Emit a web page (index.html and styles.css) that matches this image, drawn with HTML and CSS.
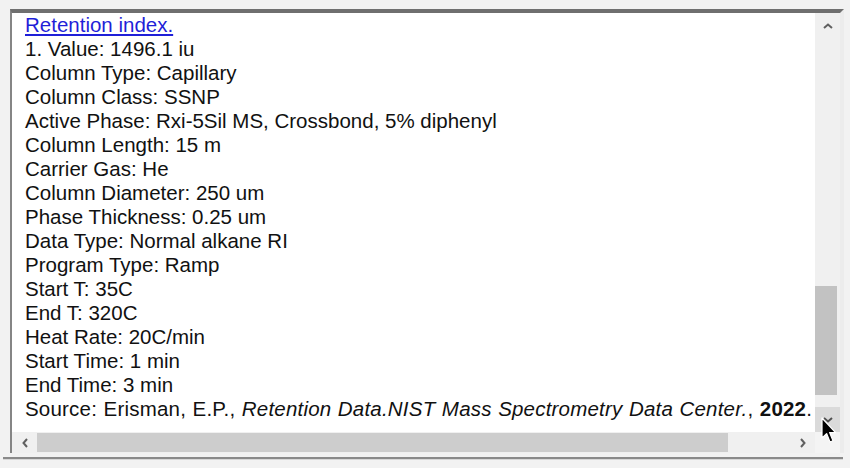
FILE: index.html
```html
<!DOCTYPE html>
<html>
<head>
<meta charset="utf-8">
<link rel="stylesheet" href="styles.css">
</head>
<body>
<div class="frame">
  <div class="content">
    <div class="line"><a class="link" href="#">Retention index.</a></div>
    <div class="line">1. Value: 1496.1 iu</div>
    <div class="line">Column Type: Capillary</div>
    <div class="line">Column Class: SSNP</div>
    <div class="line">Active Phase: Rxi-5Sil MS, Crossbond, 5% diphenyl</div>
    <div class="line">Column Length: 15 m</div>
    <div class="line">Carrier Gas: He</div>
    <div class="line">Column Diameter: 250 um</div>
    <div class="line">Phase Thickness: 0.25 um</div>
    <div class="line">Data Type: Normal alkane RI</div>
    <div class="line">Program Type: Ramp</div>
    <div class="line">Start T: 35C</div>
    <div class="line">End T: 320C</div>
    <div class="line">Heat Rate: 20C/min</div>
    <div class="line">Start Time: 1 min</div>
    <div class="line">End Time: 3 min</div>
    <div class="line source">Source: Erisman, E.P., <i>Retention Data.NIST Mass Spectrometry Data Center.</i>, <b>2022</b>.</div>
  </div>
  <div class="vscroll">
    <div class="btn"><svg width="10" height="6" viewBox="0 0 10 6"><polyline points="1,5 5,1.5 9,5" fill="none" stroke="#606060" stroke-width="2"/></svg></div>
    <div class="vtrack"><div class="vthumb"></div></div>
    <div class="btn btn-hover"><svg width="10" height="6" viewBox="0 0 10 6"><polyline points="1,1 5,4.5 9,1" fill="none" stroke="#505050" stroke-width="2"/></svg></div>
  </div>
  <div class="hscroll">
    <div class="hbtn"><svg width="6" height="10" viewBox="0 0 6 10"><polyline points="5,1 1.5,5 5,9" fill="none" stroke="#606060" stroke-width="2"/></svg></div>
    <div class="htrack"><div class="hthumb"></div></div>
    <div class="hbtn"><svg width="6" height="10" viewBox="0 0 6 10"><polyline points="1,1 4.5,5 1,9" fill="none" stroke="#606060" stroke-width="2"/></svg></div>
  </div>
  <div class="corner"></div>
</div>
<div class="baseline"></div>
<svg class="cursor" width="16" height="28" viewBox="0 0 16 28"><path d="M1 1 L1 21 L5.6 16.6 L9 25 L12 23.8 L8.6 15.6 L14.6 15.6 Z" fill="#000" stroke="#fff" stroke-width="1.2" stroke-linejoin="round"/></svg>
</body>
</html>
```
FILE: styles.css
```css
html, body {
  margin: 0;
  padding: 0;
}
body {
  background: #f2f2f2;
  width: 850px;
  height: 468px;
  overflow: hidden;
  position: relative;
  font-family: "Liberation Sans", Arial, sans-serif;
}
.frame {
  margin: 9px 0 0 10px;
  width: 828px;
  height: 440px;
  border-top: 4px solid #6f6f6f;
  border-left: 2px solid #858585;
  border-right: 4px solid #ececec;
  background: #fff;
  display: grid;
  grid-template-columns: 803px 25px;
  grid-template-rows: 419px 21px;
}
.content {
  overflow: hidden;
  padding-left: 13px;
  font-size: 20.5px;
  line-height: 24px;
  color: #111;
  white-space: nowrap;
}
.source {
  letter-spacing: 0.2px;
  word-spacing: 0.6px;
}
.link {
  color: #1f1fd8;
  text-decoration: underline;
}
.vscroll {
  background: #f0f0f0;
  display: flex;
  flex-direction: column;
}
.btn {
  height: 25px;
  display: flex;
  align-items: center;
  justify-content: center;
  flex: none;
}
.btn-hover {
  background: #dadada;
}
.vtrack {
  flex: 1;
  display: flex;
  flex-direction: column;
  padding: 248px 3px 12px 0;
}
.vthumb {
  height: 109px;
  margin-left: 0;
  background: #c2c2c2;
}
.hscroll {
  background: #f0f0f0;
  display: flex;
}
.hbtn {
  width: 25px;
  display: flex;
  align-items: center;
  justify-content: center;
  flex: none;
}
.htrack {
  flex: 1;
  display: flex;
  padding: 1px 0 1px 0;
}
.hthumb {
  width: 691px;
  background: #cdcdcd;
}
.corner {
  background: #f4f4f4;
}
.baseline {
  margin: 4px 0 0 3px;
  width: 840px;
  height: 2px;
  background: #8a8a8a;
  border-bottom: 1px solid #d8d8d8;
}
.cursor {
  position: absolute;
  left: 821px;
  top: 417px;
}
```
